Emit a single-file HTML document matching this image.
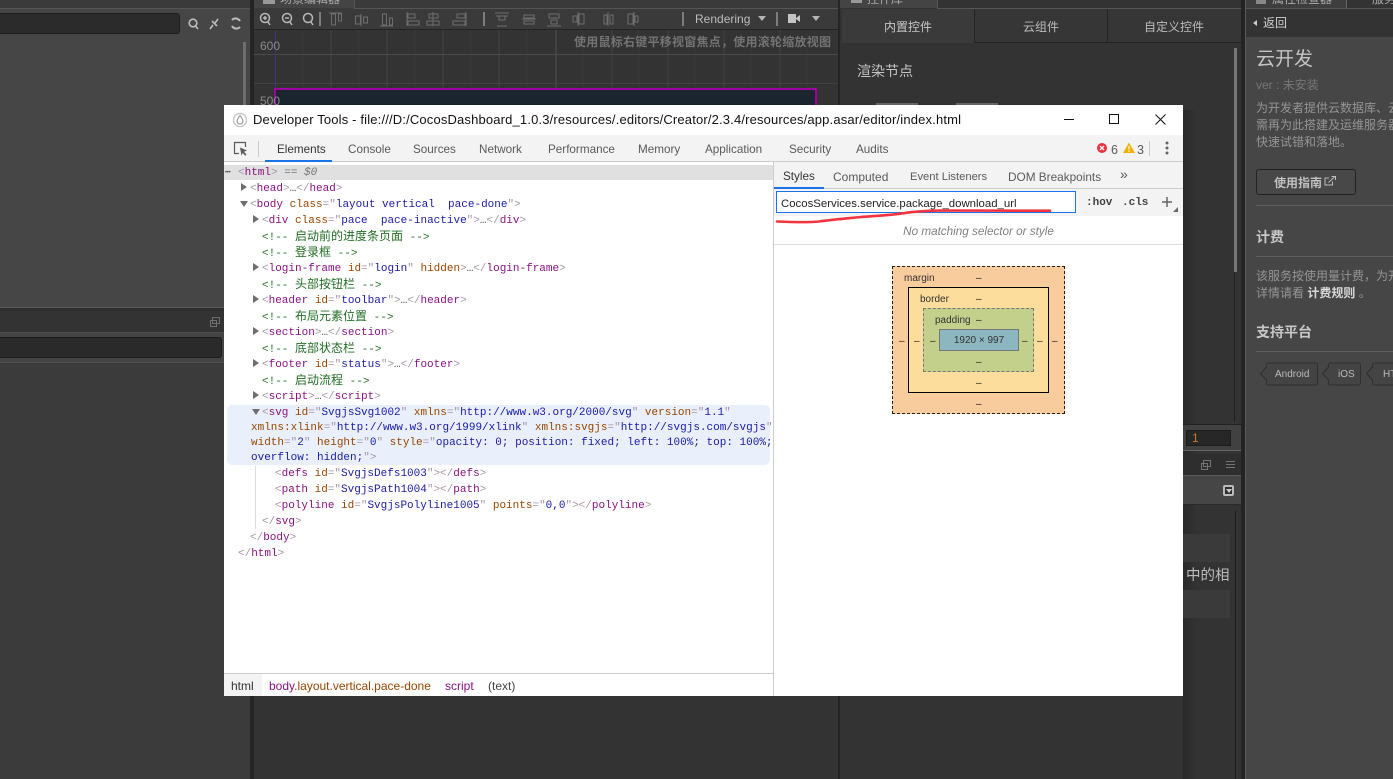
<!DOCTYPE html>
<html lang="zh">
<head>
<meta charset="utf-8">
<title>Developer Tools</title>
<style>
html,body{margin:0;padding:0;background:#333;}
#s{position:relative;width:1393px;height:779px;overflow:hidden;background:#333;font-family:"Liberation Sans","Noto Sans CJK SC",sans-serif;}
.a{position:absolute;}
.t{position:absolute;white-space:pre;line-height:16px;}
.m{position:absolute;white-space:pre;line-height:16px;font:11px/16px "Liberation Mono","Noto Sans CJK SC",monospace;color:#a894a6;}
.m b{font-weight:normal;color:#881280}
.m i{font-style:normal;color:#994500}
.m u{text-decoration:none;color:#1a1aa6}
.m em{font-style:normal;color:#236e25}
.m em span{font-size:12px;font-family:"Noto Sans CJK SC",sans-serif}
.tri{position:absolute;width:0;height:0;border-top:4px solid transparent;border-bottom:4px solid transparent;border-left:6px solid #6e6e6e;}
.trd{position:absolute;width:0;height:0;border-left:4px solid transparent;border-right:4px solid transparent;border-top:6px solid #6e6e6e;}
.tb{position:absolute;top:143px;font-size:11.700px;line-height:14px;color:#5a5a5a;white-space:pre;}
.st{position:absolute;top:170px;font-size:11.700px;line-height:14px;color:#5a5a5a;white-space:pre;}
.bm{position:absolute;font-size:10px;line-height:12px;color:#333;white-space:pre;}
.d{position:absolute;font-size:10px;line-height:12px;color:#222;}
.r{position:absolute;white-space:pre;font-size:12px;line-height:17px;color:#959595;}
.hl{position:absolute;left:1256px;width:137px;height:1px;background:#5f5f5f;}
.tag{position:absolute;top:368px;color:#bbb;font-size:10px;line-height:14px;white-space:pre;}
</style>
</head>
<body>
<div id="s">

<!-- LEFT PANELS -->
<div class="a" style="left:0;top:0;width:250px;height:8px;background:#3a3a3a;border-bottom:1px solid #555;"></div>
<div class="a" style="left:0;top:9px;width:250px;height:298px;background:#464646;"></div>
<div class="a" style="left:0;top:13px;width:180px;height:21px;background:#2b2b2b;border:1px solid #1e1e1e;border-left:0;border-radius:0 3px 3px 0;box-sizing:border-box;"></div>
<svg class="a" style="left:186px;top:16px" width="58" height="16" fill="none" stroke="#bdbdbd" stroke-width="1.6">
  <circle cx="7" cy="7" r="3.8"/><path d="M9.5 10l2.5 3"/>
  <path d="M24 13l3-4M29 7l3-4M26 5l5 5" />
  <path d="M46 4a5 5 0 0 1 8 1M54 11a5 5 0 0 1-8-1" stroke-width="2"/>
</svg>
<div class="a" style="left:243px;top:42px;width:3px;height:230px;background:#6e6e6e;"></div>
<div class="a" style="left:0;top:307px;width:250px;height:1px;background:#5c5c5c;"></div>
<div class="a" style="left:0;top:308px;width:250px;height:24px;background:#2e2e2e;border-bottom:1px solid #4c4c4c;background:linear-gradient(#2b2b2b 0,#333 4px);"></div>
<svg class="a" style="left:209px;top:316px" width="12" height="12" fill="none" stroke="#6f6f6f" stroke-width="1"><rect x="3.5" y="1.5" width="7" height="6"/><rect x="1.5" y="4.5" width="6" height="6"/></svg>
<div class="a" style="left:0;top:333px;width:250px;height:29px;background:#444;"></div>
<div class="a" style="left:0;top:337px;width:222px;height:21px;background:#2a2a2a;border:1px solid #1d1d1d;border-left:0;border-radius:0 3px 3px 0;box-sizing:border-box;"></div>
<div class="a" style="left:0;top:362px;width:250px;height:417px;background:#3b3b3b;border-top:1px solid #4f4f4f;box-sizing:border-box;"></div>
<div class="a" style="left:250px;top:0;width:4px;height:779px;background:#242424;"></div>

<!-- CENTER PANEL -->
<div class="a" style="left:254px;top:0;width:586px;height:29px;background:#3a3a3a;"></div>
<div class="a" style="left:254px;top:0;width:100px;height:8px;background:#444;overflow:hidden;border-right:1px solid #555;">
  <div class="t" style="left:26px;top:-9px;font-size:12px;color:#aaa;">场景编辑器</div>
  <div class="a" style="left:9px;top:0;width:12px;height:4px;background:#999"></div>
</div>
<div class="a" style="left:354px;top:8px;width:486px;height:1px;background:#555;"></div>
<svg class="a" style="left:254px;top:9px" width="586" height="21" fill="none" stroke="#a0a0a0" stroke-width="1">
  <g stroke-width="1.5" stroke="#b8b8b8"><circle cx="11" cy="9" r="4.5"/><path d="M14 13l2 3M9 9h4M11 7v4"/><circle cx="33" cy="9" r="4.5"/><path d="M36 13l2 3M31 9h4"/><circle cx="54" cy="9" r="4.5"/><path d="M57 13l2 3"/></g>
  <path d="M66 3v14M230 3v14M429 3v14M523 3v14" stroke="#aaa" stroke-width="1.2"/>
  <g stroke="#6e6e6e">
  <path d="M75 4h13M77.5 5h4v11h-4zM84.5 5h3v7h-3z"/>
  <path d="M107 5v12M101.5 7h5v8h-5zM109.5 8h4v6h-4z"/>
  <path d="M126 17h13M128.5 5h4v11h-4zM135.5 9h3v7h-3z"/>
  <path d="M153 3v14M154 5h7v4h-7zM154 12h11v4h-11z"/>
  <path d="M179 3v14M175 5h9v4h-9zM173 12h12v4h-12z"/>
  <path d="M212 3v14M203 5h8v4h-8zM199 12h12v4h-12z"/>
  <path d="M241 4h14M242 7h12M245 7v4h6V7M243 17h10"/>
  <path d="M268 10h14M270 6h10v3h-10zM270 12h10v3h-10z"/>
  <path d="M293 17h14M295 5h10v4h-10zM297 11h6v4h-6z"/>
  <path d="M324 3v14M325 5h5v10h-5zM319 7h4v6h-4z"/>
  <path d="M354 3v14M350 6h3v9h-3zM356 6h3v9h-3z"/>
  <path d="M380 3v14M374 5h5v10h-5zM381 7h3v6h-3z"/>
  </g>
  <path d="M504 7h8l-4 5zM558 7h8l-4 5" fill="#b5b5b5" stroke="none"/>
  <rect x="534" y="5" width="8" height="9" fill="#c4c4c4" stroke="none"/><path d="M542 9l4-3v7l-4-3" fill="#c4c4c4" stroke="none"/>
</svg>
<div class="t" style="left:695px;top:11px;font-size:12px;color:#bdbdbd;">Rendering</div>
<div class="a" style="left:254px;top:29px;width:586px;height:1px;background:#242424;"></div>

<!-- scene -->
<svg class="a" style="left:254px;top:30px" width="586" height="75">
  <rect width="586" height="75" fill="#333"/>
  <g stroke="#3a3a3a"><path d="M49 0v75M105 0v75M161 0v75M217 0v75M273 0v75M329 0v75M385 0v75M441 0v75M497 0v75M553 0v75"/></g>
  <g stroke="#434343"><path d="M77 0v75M133 0v75M189 0v75M245 0v75M358 0v75M414 0v75M470 0v75M526 0v75"/></g>
  <path d="M302 0v75" stroke="#505050"/>
  <path d="M0 24.5h586" stroke="#4a4a4a"/><path d="M0 53.5h586" stroke="#424242"/>
  <path d="M21.5 0v75" stroke="#343a7a" stroke-width="1"/>
  <rect x="21" y="58" width="542" height="30" fill="#1b2530"/>
  <rect x="21" y="59" width="541" height="30" fill="none" stroke="#a000a0" stroke-width="2"/>
</svg>
<div class="t" style="left:574px;top:34px;font-size:12px;font-weight:bold;color:#737373;letter-spacing:.25px;">使用鼠标右键平移视窗焦点，使用滚轮缩放视图</div>
<div class="t" style="left:260px;top:38px;font-size:12px;color:#8a8a8a;">600</div>
<div class="t" style="left:260px;top:93px;font-size:12px;color:#8a8a8a;">500</div>
<div class="a" style="left:254px;top:696px;width:586px;height:83px;background:#333;"></div>

<!-- RIGHT-CENTER PANEL -->
<div class="a" style="left:838px;top:0;width:403px;height:779px;background:#333;"></div>
<div class="a" style="left:838px;top:0;width:2px;height:779px;background:#242424;"></div>
<div class="a" style="left:840px;top:0;width:97px;height:8px;background:#444;overflow:hidden;border-right:1px solid #555;">
  <div class="t" style="left:27px;top:-9px;font-size:12px;color:#aaa;">控件库</div>
  <div class="a" style="left:11px;top:0;width:11px;height:3px;background:#999"></div>
</div>
<div class="a" style="left:937px;top:8px;width:304px;height:1px;background:#555;"></div>
<div class="a" style="left:974px;top:9px;width:133px;height:34px;background:#363636;border-left:1px solid #242424;border-bottom:1px solid #242424;box-sizing:border-box;"></div>
<div class="a" style="left:1107px;top:9px;width:134px;height:34px;background:#363636;border-left:1px solid #242424;border-bottom:1px solid #242424;box-sizing:border-box;"></div>
<div class="a" style="left:842px;top:9px;width:132px;height:34px;background:#3a3a3a;"></div>
<div class="t" style="left:884px;top:19px;font-size:12px;color:#c8c8c8;">内置控件</div>
<div class="t" style="left:1023px;top:19px;font-size:12px;color:#bbb;">云组件</div>
<div class="t" style="left:1144px;top:19px;font-size:12px;color:#bbb;">自定义控件</div>
<div class="t" style="left:857px;top:63px;font-size:14px;color:#c4c4c4;">渲染节点</div>
<div class="a" style="left:876px;top:103px;width:42px;height:2px;background:#666"></div>
<div class="a" style="left:956px;top:103px;width:42px;height:2px;background:#666"></div>
<div class="a" style="left:1234px;top:48px;width:3px;height:224px;background:#777;"></div>
<div class="a" style="left:1234px;top:272px;width:1px;height:150px;background:#222;"></div>

<div class="a" style="left:1183px;top:110px;width:14px;height:669px;background:linear-gradient(90deg,#292929,#333);"></div>
<div class="a" style="left:1183px;top:424px;width:58px;height:1px;background:#222;"></div>
<div class="a" style="left:1183px;top:425px;width:58px;height:26px;background:#414141;border-bottom:1px solid #666;box-sizing:border-box;"></div>
<div class="a" style="left:1186px;top:430px;width:45px;height:16px;background:#272727;border:1px solid #1c1c1c;box-sizing:border-box;"></div>
<div class="t" style="left:1192px;top:430px;font-size:12px;color:#c77a26;">1</div>
<div class="a" style="left:1183px;top:454px;width:58px;height:21px;background:#2e2e2e;"></div>
<svg class="a" style="left:1200px;top:459px" width="38" height="12" fill="none" stroke="#747474"><rect x="3.5" y="1.5" width="7" height="6"/><rect x="1.5" y="4.5" width="6" height="6"/><path d="M26 2.5h9M26 5.5h9M26 8.5h9"/></svg>
<div class="a" style="left:1183px;top:475px;width:58px;height:30px;background:#464646;border-top:1px solid #5a5a5a;border-bottom:1px solid #2a2a2a;box-sizing:border-box;"></div>
<div class="a" style="left:1223px;top:485px;width:11px;height:11px;background:#2f2f2f;border:2px solid #bbb;border-radius:2px;box-sizing:border-box;"></div>
<div class="a" style="left:1225.5px;top:489px;width:0;height:0;border-left:3px solid transparent;border-right:3px solid transparent;border-top:4px solid #ccc;"></div>
<div class="a" style="left:1235px;top:511px;width:1px;height:268px;background:#1c1c1c;"></div>
<div class="a" style="left:1183px;top:534px;width:47px;height:28px;background:#3a3a3a;"></div>
<div class="a" style="left:1183px;top:590px;width:47px;height:28px;background:#3a3a3a;"></div>
<div class="a" style="left:1183px;top:561px;width:47px;height:28px;overflow:hidden;">
  <div class="t" style="left:3px;top:7px;font-size:14.500px;color:#bcbcbc;">中的相关</div>
</div>

<!-- RIGHT PANEL -->
<div class="a" style="left:1241px;top:0;width:5px;height:779px;background:#232323;"></div>
<div class="a" style="left:1245px;top:0;width:1px;height:779px;background:#5b5b5b;"></div>
<div class="a" style="left:1246px;top:0;width:147px;height:779px;background:#464646;"></div>
<div class="a" style="left:1246px;top:0;width:147px;height:9px;background:#333;"></div>
<div class="a" style="left:1246px;top:8px;width:147px;height:1px;background:#555;"></div>
<div class="a" style="left:1246px;top:0;width:100px;height:8px;background:#3e3e3e;overflow:hidden;">
  <div class="t" style="left:26px;top:-9px;font-size:12px;color:#aaa;">属性检查器</div>
  <div class="a" style="left:10px;top:0;width:10px;height:4px;background:#888"></div>
</div>
<div class="a" style="left:1346px;top:0;width:1px;height:8px;background:#666;"></div>
<div class="t" style="left:1372px;top:-9px;font-size:12px;color:#aaa;">服务</div>
<div class="a" style="left:1246px;top:9px;width:147px;height:28px;background:#333;"></div>
<div class="a" style="left:1253px;top:20px;width:0;height:0;border-top:3.5px solid transparent;border-bottom:3.5px solid transparent;border-right:4px solid #ccc;"></div>
<div class="t" style="left:1263px;top:15px;font-size:12px;color:#d0d0d0;">返回</div>
<div class="t" style="left:1256px;top:48px;font-size:19px;line-height:24px;color:#c4c4c4;">云开发</div>
<div class="t" style="left:1256px;top:77px;font-size:12px;color:#777;">ver : 未安装</div>
<div class="r" style="left:1256px;top:100px;">为开发者提供云数据库、云</div>
<div class="r" style="left:1256px;top:117px;">需再为此搭建及运维服务器</div>
<div class="r" style="left:1256px;top:134px;">快速试错和落地。</div>
<div class="a" style="left:1256px;top:169px;width:100px;height:26px;background:#484848;border:1px solid #222;border-radius:3px;box-sizing:border-box;"></div>
<div class="t" style="left:1274px;top:175px;font-size:12px;font-weight:bold;color:#c0c0c0;">使用指南</div>
<svg class="a" style="left:1324px;top:175px" width="13" height="12" fill="none" stroke="#bdbdbd"><path d="M8.5 6.5v3.5h-7.500v-7h4"/><path d="M4.500 7.500l6-5.500M7.500 1.500h4v3.500"/></svg>
<div class="hl" style="top:205px;"></div>
<div class="t" style="left:1256px;top:229px;font-size:14px;font-weight:bold;color:#c8c8c8;">计费</div>
<div class="hl" style="top:256px;"></div>
<div class="r" style="left:1256px;top:268px;">该服务按使用量计费，为开</div>
<div class="r" style="left:1256px;top:285px;">详情请看 <span style="font-weight:bold;color:#d8d8d8;">计费规则</span> 。</div>
<div class="t" style="left:1256px;top:324px;font-size:14px;font-weight:bold;color:#c8c8c8;">支持平台</div>
<div class="hl" style="top:351px;"></div>
<svg class="a" style="left:1258px;top:360px" width="135" height="26" fill="#444" stroke="#303030">
  <path d="M2.500 13.500L8.500 7V5a2 2 0 0 1 2-2h47a2 2 0 0 1 2 2v18a2 2 0 0 1-2 2h-47a2 2 0 0 1-2-2v-3z"/>
  <path d="M64.500 13.500L70.500 7V5a2 2 0 0 1 2-2h28a2 2 0 0 1 2 2v18a2 2 0 0 1-2 2h-28a2 2 0 0 1-2-2v-3z"/>
  <path d="M108.500 13.500L114.500 7V5a2 2 0 0 1 2-2h30v22h-30a2 2 0 0 1-2-2v-3z"/>
</svg>
<div class="tag" style="left:1275px;">Android</div>
<div class="tag" style="left:1338px;">iOS</div>
<div class="tag" style="left:1383px;">HTML5</div>

<!-- DEVTOOLS WINDOW -->
<div class="a" style="left:224px;top:105px;width:959px;height:591px;background:#fff;"></div>
<svg class="a" style="left:232px;top:112px" width="16" height="16" fill="none"><circle cx="8" cy="8" r="6.500" stroke="#c9c9c9" stroke-width="1.500"/><path d="M8 3.500c2 2.500 3 4 3 5.500a3 3 0 0 1-6 0c0-1.500 1-3 3-5.500z" fill="#fff" stroke="#8a8a8a"/></svg>
<div class="t" id="title" style="left:253px;top:112px;font-size:13px;color:#111;letter-spacing:.16px;">Developer Tools - file:///D:/CocosDashboard_1.0.3/resources/.editors/Creator/2.3.4/resources/app.asar/editor/index.html</div>
<svg class="a" style="left:1060px;top:108px" width="115" height="22" fill="none" stroke="#111" stroke-width="1"><path d="M4 11.500h10"/><rect x="49.500" y="6.500" width="9" height="9"/><path d="M95.500 6.500l10 10M105.500 6.500l-10 10"/></svg>

<!-- tabs bar -->
<div class="a" style="left:224px;top:135px;width:959px;height:26px;background:#f3f3f3;border-bottom:1px solid #ccc;box-sizing:content-box;"></div>
<svg class="a" style="left:233px;top:141px" width="16" height="16" fill="none"><path d="M6 12.500H1.500v-11h11V6" stroke="#5a5a5a" stroke-width="1.200"/><path d="M7 6.500l7 3-3 1.200 2.500 2.800-1.300 1.200-2.500-2.800-1.200 2.800z" fill="#5a5a5a"/></svg>
<div class="a" style="left:258px;top:141px;width:1px;height:16px;background:#ccc;"></div>
<div class="a" style="left:265px;top:160px;width:67px;height:2px;background:#1a73e8;"></div>
<div class="tb" style="left:277px;color:#333;">Elements</div>
<div class="tb" style="left:348px;">Console</div>
<div class="tb" style="left:413px;">Sources</div>
<div class="tb" style="left:479px;">Network</div>
<div class="tb" style="left:548px;">Performance</div>
<div class="tb" style="left:638px;">Memory</div>
<div class="tb" style="left:705px;">Application</div>
<div class="tb" style="left:789px;">Security</div>
<div class="tb" style="left:856px;">Audits</div>
<svg class="a" style="left:1096px;top:141px" width="80" height="16"><circle cx="6" cy="7" r="5" fill="#e8303f"/><path d="M4 5l4 4M8 5l-4 4" stroke="#fff" stroke-width="1.300"/><path d="M33 1.500l6 10.500h-12z" fill="#f2b100"/><path d="M33 5v3.500M33 9.500v1.300" stroke="#fff" stroke-width="1.200"/><path d="M53.500 0v15" stroke="#ccc"/><circle cx="71" cy="2" r="1.500" fill="#666"/><circle cx="71" cy="7" r="1.500" fill="#666"/><circle cx="71" cy="12" r="1.500" fill="#666"/></svg>
<div class="tb" style="left:1111px;font-size:12.500px;">6</div>
<div class="tb" style="left:1137px;font-size:12.500px;">3</div>

<!-- elements pane -->
<div class="a" style="left:773px;top:162px;width:1px;height:534px;background:#ccc;"></div>
<div class="a" style="left:224px;top:165px;width:549px;height:15px;background:#e0e0e0;"></div>
<div class="a" style="left:227px;top:405px;width:543px;height:60px;background:#e9f0fb;border-radius:5px;"></div>
<div class="a" style="left:255px;top:466px;width:1px;height:63px;background:#ddd;"></div>

<div class="t" style="left:225px;top:165px;font-size:6px;color:#555;letter-spacing:-.3px;">•••</div>
<div class="m" style="left:238px;top:165px;">&lt;<b>html</b>&gt; <span style="color:#777">==</span> <span style="color:#777;font-style:italic">$0</span></div>
<div class="tri" style="left:241px;top:183px;"></div>
<div class="m" style="left:250px;top:181px;">&lt;<b>head</b>&gt;<span style="color:#555">…</span>&lt;/<b>head</b>&gt;</div>
<div class="trd" style="left:240px;top:201px;"></div>
<div class="m" style="left:250px;top:197px;">&lt;<b>body</b> <i>class</i>="<u>layout vertical  pace-done</u>"&gt;</div>
<div class="tri" style="left:253px;top:215px;"></div>
<div class="m" style="left:262px;top:213px;">&lt;<b>div</b> <i>class</i>="<u>pace  pace-inactive</u>"&gt;<span style="color:#555">…</span>&lt;/<b>div</b>&gt;</div>
<div class="m" style="left:262px;top:228px;"><em>&lt;!-- <span>启动前的进度条页面</span> --&gt;</em></div>
<div class="m" style="left:262px;top:244px;"><em>&lt;!-- <span>登录框</span> --&gt;</em></div>
<div class="tri" style="left:253px;top:263px;"></div>
<div class="m" style="left:262px;top:261px;">&lt;<b>login-frame</b> <i>id</i>="<u>login</u>" <i>hidden</i>&gt;<span style="color:#555">…</span>&lt;/<b>login-frame</b>&gt;</div>
<div class="m" style="left:262px;top:276px;"><em>&lt;!-- <span>头部按钮栏</span> --&gt;</em></div>
<div class="tri" style="left:253px;top:295px;"></div>
<div class="m" style="left:262px;top:293px;">&lt;<b>header</b> <i>id</i>="<u>toolbar</u>"&gt;<span style="color:#555">…</span>&lt;/<b>header</b>&gt;</div>
<div class="m" style="left:262px;top:308px;"><em>&lt;!-- <span>布局元素位置</span> --&gt;</em></div>
<div class="tri" style="left:253px;top:327px;"></div>
<div class="m" style="left:262px;top:325px;">&lt;<b>section</b>&gt;<span style="color:#555">…</span>&lt;/<b>section</b>&gt;</div>
<div class="m" style="left:262px;top:340px;"><em>&lt;!-- <span>底部状态栏</span> --&gt;</em></div>
<div class="tri" style="left:253px;top:359px;"></div>
<div class="m" style="left:262px;top:357px;">&lt;<b>footer</b> <i>id</i>="<u>status</u>"&gt;<span style="color:#555">…</span>&lt;/<b>footer</b>&gt;</div>
<div class="m" style="left:262px;top:372px;"><em>&lt;!-- <span>启动流程</span> --&gt;</em></div>
<div class="tri" style="left:253px;top:391px;"></div>
<div class="m" style="left:262px;top:389px;">&lt;<b>script</b>&gt;<span style="color:#555">…</span>&lt;/<b>script</b>&gt;</div>
<div class="trd" style="left:252px;top:409px;"></div>
<div class="m" style="left:262px;top:405px;">&lt;<b>svg</b> <i>id</i>="<u>SvgjsSvg1002</u>" <i>xmlns</i>="<u>http://www.w3.org/2000/svg</u>" <i>version</i>="<u>1.1</u>"</div>
<div class="m" style="left:251px;top:420px;"><i>xmlns:xlink</i>="<u>http://www.w3.org/1999/xlink</u>" <i>xmlns:svgjs</i>="<u>http://svgjs.com/svgjs</u>"</div>
<div class="m" style="left:251px;top:435px;"><i>width</i>="<u>2</u>" <i>height</i>="<u>0</u>" <i>style</i>="<u>opacity: 0; position: fixed; left: 100%; top: 100%;</u></div>
<div class="m" style="left:251px;top:450px;"><u>overflow: hidden;</u>"&gt;</div>
<div class="m" style="left:275px;top:466px;">&lt;<b>defs</b> <i>id</i>="<u>SvgjsDefs1003</u>"&gt;&lt;/<b>defs</b>&gt;</div>
<div class="m" style="left:275px;top:482px;">&lt;<b>path</b> <i>id</i>="<u>SvgjsPath1004</u>"&gt;&lt;/<b>path</b>&gt;</div>
<div class="m" style="left:275px;top:498px;">&lt;<b>polyline</b> <i>id</i>="<u>SvgjsPolyline1005</u>" <i>points</i>="<u>0,0</u>"&gt;&lt;/<b>polyline</b>&gt;</div>
<div class="m" style="left:262px;top:514px;">&lt;/<b>svg</b>&gt;</div>
<div class="m" style="left:250px;top:530px;">&lt;/<b>body</b>&gt;</div>
<div class="m" style="left:238px;top:546px;">&lt;/<b>html</b>&gt;</div>

<!-- breadcrumb -->
<div class="a" style="left:224px;top:673px;width:549px;height:1px;background:#ccc;"></div>
<div class="a" style="left:224px;top:674px;width:38px;height:22px;background:#f3f3f3;"></div>
<div class="t" style="left:231px;top:678px;font-size:12px;color:#333;">html</div>
<div class="t" style="left:269px;top:678px;font-size:12px;color:#881280;">body<span style="color:#994500">.layout.vertical.pace-done</span></div>
<div class="t" style="left:445px;top:678px;font-size:12px;color:#881280;">script</div>
<div class="t" style="left:488px;top:678px;font-size:12px;color:#444;">(text)</div>

<!-- styles pane -->
<div class="a" style="left:774px;top:162px;width:409px;height:27px;background:#f3f3f3;border-bottom:1px solid #ccc;box-sizing:border-box;"></div>
<div class="a" style="left:774px;top:187px;width:50px;height:2px;background:#1a73e8;"></div>
<div class="st" style="left:783px;color:#333;">Styles</div>
<div class="st" style="left:833px;font-size:12px;">Computed</div>
<div class="st" style="left:910px;font-size:11.200px;">Event Listeners</div>
<div class="st" style="left:1008px;font-size:11.800px;">DOM Breakpoints</div>
<div class="st" style="left:1120px;top:167px;font-size:14px;color:#555;">»</div>
<div class="a" style="left:774px;top:189px;width:409px;height:27px;background:#f3f3f3;"></div>
<div class="a" style="left:776px;top:191px;width:300px;height:22px;background:#fff;border:1px solid #1a73e8;box-sizing:border-box;"></div>
<div class="t" style="left:781px;top:196px;font-size:11.400px;color:#222;">CocosServices.service.package_download_url</div>
<div class="m" style="left:1086px;top:195px;color:#444;font-weight:bold;">:hov</div>
<div class="m" style="left:1122px;top:195px;color:#444;font-weight:bold;">.cls</div>
<svg class="a" style="left:1160px;top:194px" width="20" height="20" fill="none"><path d="M7 3v10M2 8h10" stroke="#666" stroke-width="1.500"/><path d="M18 13v5h-5z" fill="#666"/></svg>
<div class="t" style="left:774px;top:224px;width:409px;text-align:center;font-size:11.700px;font-style:italic;color:#808080;">No matching selector or style</div>
<div class="a" style="left:774px;top:244px;width:409px;height:1px;background:#ddd;"></div>
<svg class="a" style="left:774px;top:205px" width="290" height="20" fill="none"><path d="M3 16.500 C15 17,35 17.500,45 16.500 C60 14.500,72 13.500,87 12 C100 11,115 10.500,131 8 C143 6,150 6,165 5.500 L276 5.700" stroke="#f5333f" stroke-width="2.600" stroke-linecap="round"/></svg>

<!-- box model -->
<div class="a" style="left:892px;top:266px;width:173px;height:148px;background:#f9cc9d;border:1px dashed #222;box-sizing:border-box;"></div>
<div class="a" style="left:908px;top:287px;width:141px;height:106px;background:#fddd9b;border:1px solid #000;box-sizing:border-box;"></div>
<div class="a" style="left:923px;top:308px;width:111px;height:64px;background:#c3d08b;border:1px dashed #777;box-sizing:border-box;"></div>
<div class="a" style="left:939px;top:329px;width:80px;height:22px;background:#8cb6c0;border:1px solid #777;box-sizing:border-box;"></div>
<div class="bm" style="left:904px;top:273px;">margin</div>
<div class="bm" style="left:920px;top:294px;">border</div>
<div class="bm" style="left:935px;top:315px;">padding</div>
<div class="bm" style="left:939px;top:335px;width:80px;text-align:center;">1920 × 997</div>
<div class="d" style="left:976px;top:273px;">–</div>
<div class="d" style="left:976px;top:294px;">–</div>
<div class="d" style="left:976px;top:315px;">–</div>
<div class="d" style="left:976px;top:357px;">–</div>
<div class="d" style="left:976px;top:378px;">–</div>
<div class="d" style="left:976px;top:399px;">–</div>
<div class="d" style="left:899px;top:336px;">–</div>
<div class="d" style="left:914px;top:336px;">–</div>
<div class="d" style="left:930px;top:336px;">–</div>
<div class="d" style="left:1022px;top:336px;">–</div>
<div class="d" style="left:1037px;top:336px;">–</div>
<div class="d" style="left:1052px;top:336px;">–</div>

</div>
</body>
</html>
